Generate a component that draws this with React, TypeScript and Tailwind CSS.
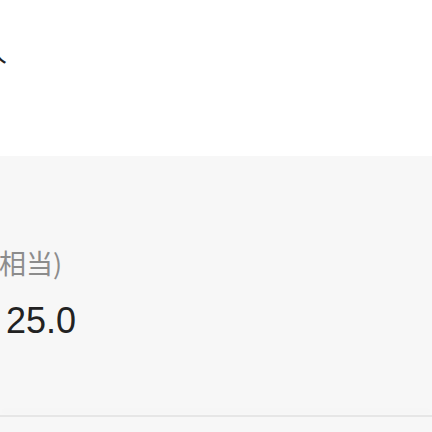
export default function App() {
  return (
    <div className="w-[432px] h-[432px] overflow-hidden bg-[#f7f7f7] font-['Liberation_Sans','Noto_Sans_CJK_SC',sans-serif]">
      {/* Title area (cut off on the left) */}
      <div className="h-[156px] bg-white overflow-hidden">
        <div className="pt-[38px] -ml-[19px] text-[26px] leading-[30px] text-[#222]">人</div>
      </div>

      {/* Amount block */}
      <div className="h-[259px] pt-[91px] overflow-hidden">
        <div className="-ml-[1px] text-[27px] leading-[32px] text-[#8c8c8c] font-['Noto_Sans_CJK_SC',sans-serif]">
          相当)
        </div>
        <div className="mt-[24px] pl-[6px] text-[36px] leading-[36px] text-[#222]">25.0</div>
      </div>

      {/* Divider */}
      <div className="h-[2px] bg-[#e6e6e6] shadow-[0_-5px_6px_rgba(0,0,0,0.025)]" />
      <div className="h-[16px] bg-[#f7f7f7]" />
    </div>
  );
}
